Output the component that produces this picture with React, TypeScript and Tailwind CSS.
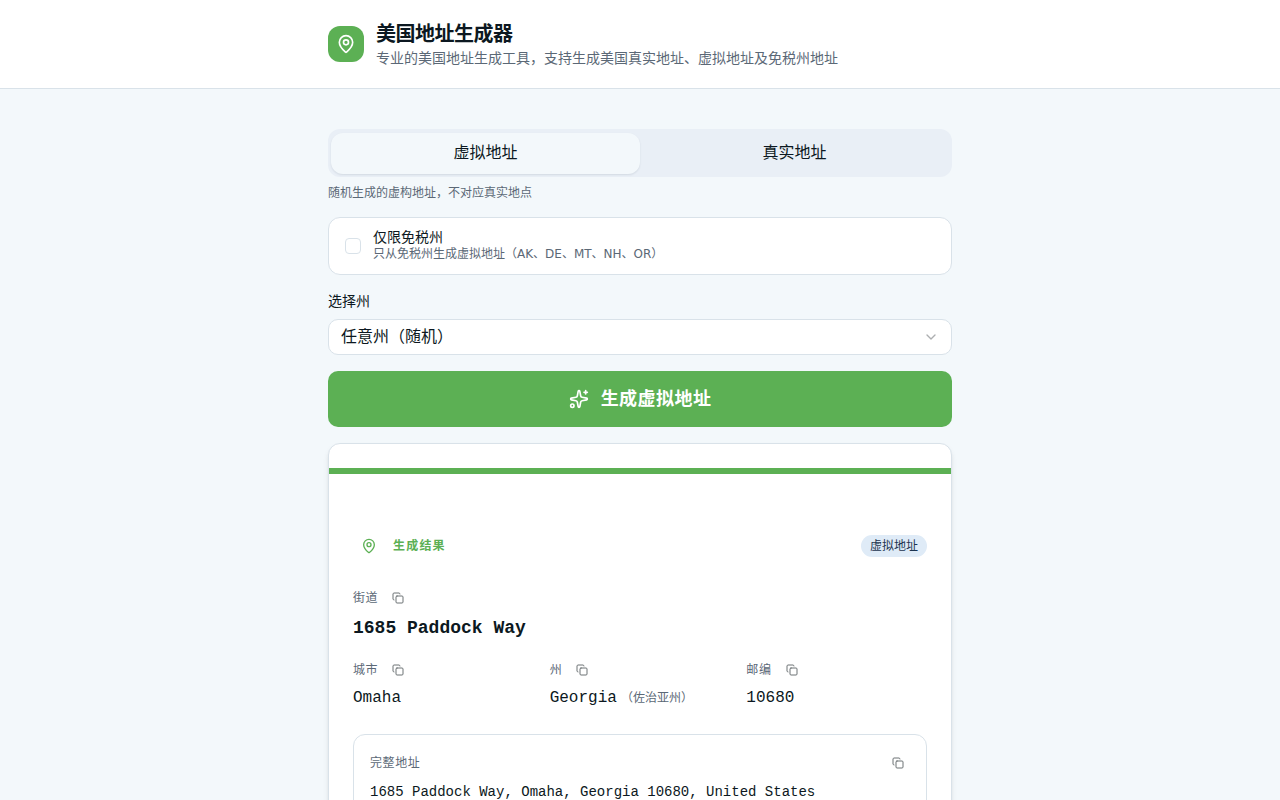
import { useState } from 'react';
import { ChevronDown, Copy, MapPin } from 'lucide-react';

const address = {
  street: '1685 Paddock Way',
  city: 'Omaha',
  state: 'Georgia',
  stateZh: '佐治亚州',
  zip: '10680',
};

const modes = [
  { id: 'virtual', label: '虚拟地址', hint: '随机生成的虚构地址，不对应真实地点' },
  { id: 'real', label: '真实地址', hint: '来自真实地点的地址' },
];

function SparklesIcon() {
  return (
    <svg
      className="w-5 h-5"
      viewBox="0 0 24 24"
      fill="none"
      stroke="currentColor"
      strokeWidth="2"
      strokeLinecap="round"
      strokeLinejoin="round"
      aria-hidden="true"
    >
      <path d="M11.017 2.814a1 1 0 0 1 1.966 0l1.051 5.558a2 2 0 0 0 1.594 1.594l5.558 1.051a1 1 0 0 1 0 1.966l-5.558 1.051a2 2 0 0 0-1.594 1.594l-1.051 5.558a1 1 0 0 1-1.966 0l-1.051-5.558a2 2 0 0 0-1.594-1.594l-5.558-1.051a1 1 0 0 1 0-1.966l5.558-1.051a2 2 0 0 0 1.594-1.594z" />
      <path d="M20 2v4" />
      <path d="M22 4h-4" />
      <circle cx="4" cy="20" r="2" />
    </svg>
  );
}

function CopyButton({ text, label }: { text: string; label: string }) {
  return (
    <button
      type="button"
      onClick={() => navigator.clipboard?.writeText(text)}
      className="w-6 h-6 flex items-center justify-center rounded-md text-[#6c7275] hover:bg-slate-100"
      aria-label={label}
    >
      <Copy className="w-3 h-3" />
    </button>
  );
}

function FieldLabel({ name, value }: { name: string; value: string }) {
  return (
    <div className="flex items-center gap-2">
      <span className="text-xs tracking-wider text-[#5b6876]">{name}</span>
      <CopyButton text={value} label={`复制${name}`} />
    </div>
  );
}

export default function App() {
  const [mode, setMode] = useState('virtual');
  const [taxFree, setTaxFree] = useState(false);

  const current = modes.find(m => m.id === mode) ?? modes[0];
  const full = `${address.street}, ${address.city}, ${address.state} ${address.zip}, United States`;

  return (
    <div
      lang="zh-CN"
      className="min-h-screen bg-[#f3f8fb] text-[#0c1821] font-['DejaVu_Sans','Noto_Sans_CJK_SC',sans-serif]"
    >
      <header className="bg-white border-b border-[#d9e2e9]">
        <div className="max-w-2xl mx-auto px-6 py-5 flex items-center gap-3">
          <div className="w-9 h-9 rounded-xl bg-[#5cb054] text-white flex items-center justify-center">
            <MapPin className="w-5 h-5" />
          </div>
          <div>
            <h1 className="text-xl font-bold tracking-tight">美国地址生成器</h1>
            <p className="text-sm text-[#5b6876]">专业的美国地址生成工具，支持生成美国真实地址、虚拟地址及免税州地址</p>
          </div>
        </div>
      </header>

      <main className="max-w-2xl mx-auto px-6 py-10 space-y-4">
        <div className="space-y-2">
          <div role="tablist" className="h-12 p-[3px] flex items-center rounded-xl bg-[#e9eff6]">
            {modes.map(m => (
              <button
                key={m.id}
                type="button"
                role="tab"
                aria-selected={m.id === mode}
                onClick={() => setMode(m.id)}
                className={
                  m.id === mode
                    ? 'flex-1 h-[calc(100%-1px)] rounded-xl bg-[#f3f8fb] shadow-[0_1px_2px_rgba(15,40,60,0.1)]'
                    : 'flex-1 h-[calc(100%-1px)] rounded-xl'
                }
              >
                {m.label}
              </button>
            ))}
          </div>
          <p className="text-xs text-[#5b6876]">{current.hint}</p>
        </div>

        <div className="flex items-center gap-3 px-4 py-3 rounded-xl border border-[#d9e2e9] bg-white">
          <input
            id="tax-free"
            type="checkbox"
            checked={taxFree}
            onChange={e => setTaxFree(e.target.checked)}
            className="appearance-none w-4 h-4 rounded-sm border border-[#d9e2e9] bg-white checked:bg-[#5cb054]"
          />
          <label htmlFor="tax-free" className="flex flex-col gap-0.5">
            <span className="text-sm leading-none">仅限免税州</span>
            <span className="text-xs text-[#5b6876]">只从免税州生成虚拟地址（AK、DE、MT、NH、OR）</span>
          </label>
        </div>

        <div className="space-y-2">
          <label htmlFor="state" className="block text-sm">选择州</label>
          <div className="relative">
            <select
              id="state"
              className="appearance-none block w-full h-9 pl-3 pr-9 rounded-[10px] border border-[#d9e2e9] bg-white text-base"
            >
              <option>任意州（随机）</option>
              <option>佐治亚州</option>
            </select>
            <ChevronDown className="absolute right-[13px] top-1/2 -translate-y-1/2 w-4 h-4 text-[#5b6064] opacity-50 pointer-events-none" />
          </div>
        </div>

        <button
          type="button"
          className="w-full h-14 flex items-center justify-center gap-3 rounded-[10px] bg-[#5cb054] text-white text-lg font-bold tracking-wide hover:bg-[#52a24b]"
        >
          <SparklesIcon />
          生成虚拟地址
        </button>

        <section className="rounded-xl border border-[#d9e2e9] bg-white shadow-md py-6">
          <div className="h-1.5 bg-[#5cb054]" />

          <div className="px-6 pt-14 space-y-6">
            <div className="flex items-center justify-between">
              <div className="flex items-center gap-2 text-[#5cb054]">
                <div className="w-8 h-8 flex items-center justify-center">
                  <MapPin className="w-4 h-4" />
                </div>
                <h2 className="text-xs font-bold tracking-widest">生成结果</h2>
              </div>
              <span className="px-2 py-0.5 rounded-full border border-transparent bg-[#dfebf7] text-xs text-[#1c3450]">
                {current.label}
              </span>
            </div>

            <div className="space-y-4">
              <div className="space-y-1">
                <FieldLabel name="街道" value={address.street} />
                <p className="font-['Liberation_Mono','Noto_Sans_CJK_SC',monospace] text-lg font-bold">{address.street}</p>
              </div>

              <div className="grid grid-cols-3 gap-4">
                <div className="space-y-1">
                  <FieldLabel name="城市" value={address.city} />
                  <p className="font-['Liberation_Mono','Noto_Sans_CJK_SC',monospace]">{address.city}</p>
                </div>
                <div className="space-y-1">
                  <FieldLabel name="州" value={address.state} />
                  <p className="font-['Liberation_Mono','Noto_Sans_CJK_SC',monospace]">
                    {address.state}
                    <span className="ml-1 text-xs text-[#5b6876]">（{address.stateZh}）</span>
                  </p>
                </div>
                <div className="space-y-1">
                  <FieldLabel name="邮编" value={address.zip} />
                  <p className="font-['Liberation_Mono','Noto_Sans_CJK_SC',monospace]">{address.zip}</p>
                </div>
              </div>
            </div>

            <div className="p-4 rounded-xl border border-[#d9e2e9] space-y-1">
              <div className="flex items-center justify-between">
                <span className="text-xs tracking-wider text-[#5b6876]">完整地址</span>
                <CopyButton text={full} label="复制完整地址" />
              </div>
              <p className="font-['Liberation_Mono','Noto_Sans_CJK_SC',monospace] text-sm leading-[26px]">{full}</p>
            </div>
          </div>
        </section>
      </main>
    </div>
  );
}
